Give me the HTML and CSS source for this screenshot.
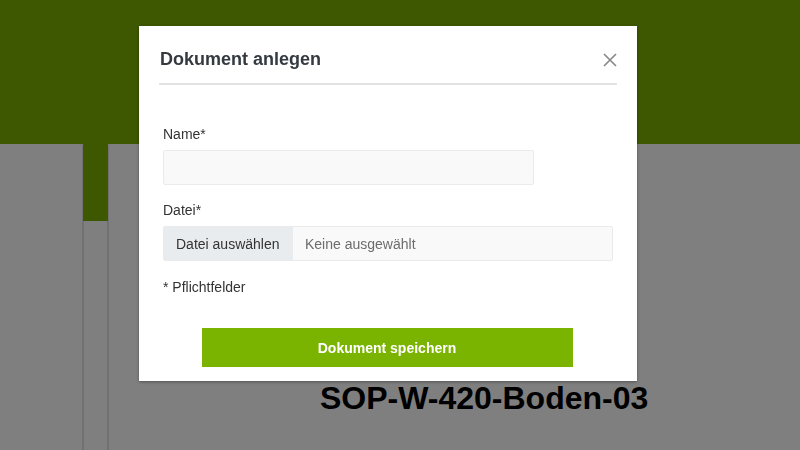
FILE: index.html
```html
<!DOCTYPE html>
<html lang="de">
<head>
<meta charset="utf-8">
<title>Dokument anlegen</title>
<link rel="stylesheet" href="styles.css">
</head>
<body>
<div class="page">
  <div class="col col-left">
    <div class="band"></div>
    <div class="card card-left"></div>
  </div>
  <div class="col col-mid">
    <div class="band band-tall"></div>
    <div class="card card-mid"></div>
  </div>
  <div class="col col-right">
    <div class="band"></div>
    <div class="card card-right">
      <h1 class="doc-title">SOP-W-420-Boden-03</h1>
    </div>
  </div>
</div>
<div class="overlay">
  <div class="modal">
    <div class="modal-header">
      <h2 class="modal-title">Dokument anlegen</h2>
      <button class="close" aria-label="Schließen">
        <svg width="14" height="14" viewBox="0 0 14 14"><path d="M1 1 L13 13 M13 1 L1 13" stroke="#8a8a8a" stroke-width="1.7" fill="none"/></svg>
      </button>
    </div>
    <div class="modal-body">
      <div class="field">
        <label class="label">Name*</label>
        <div class="input"></div>
      </div>
      <div class="field field-file">
        <label class="label">Datei*</label>
        <div class="file">
          <span class="file-btn">Datei auswählen</span>
          <span class="file-name">Keine ausgewählt</span>
        </div>
      </div>
      <p class="note">* Pflichtfelder</p>
      <div class="actions">
        <button class="save">Dokument speichern</button>
      </div>
    </div>
  </div>
</div>
</body>
</html>
```
FILE: styles.css
```css
* { box-sizing: border-box; }
html, body { margin: 0; padding: 0; }
body {
  width: 800px;
  height: 450px;
  overflow: hidden;
  font-family: "Liberation Sans", Arial, sans-serif;
  background: #ffffff;
}
.page {
  display: flex;
  height: 450px;
}
.col {
  display: flex;
  flex-direction: column;
}
.col-left { width: 83px; }
.col-mid { width: 25px; }
.col-right { flex: 1; }
.band {
  height: 144px;
  background: #7ab000;
  flex: none;
}
.band-tall { height: 221px; }
.card {
  flex: 1;
  background: #ffffff;
}
.card-left {
  border-right: 1px solid #e2e2e2;
  border-top-right-radius: 4px;
}
.card-mid {
  border-left: 1px solid #e2e2e2;
  border-right: 1px solid #e2e2e2;
}
.card-right {
  border-left: 1px solid #e2e2e2;
  border-top-left-radius: 4px;
  padding-left: 211px;
  padding-top: 236px;
}
.doc-title {
  margin: 0;
  font-size: 32px;
  line-height: 37px;
  font-weight: bold;
  color: #000;
  white-space: nowrap;
}
.overlay {
  position: fixed;
  inset: 0;
  background: rgba(0, 0, 0, 0.5);
}
.modal {
  position: absolute;
  left: 139px;
  top: 26px;
  width: 498px;
  height: 355px;
  background: #ffffff;
  box-shadow: 0 1px 3px rgba(0, 0, 0, 0.35);
  padding: 0 20px;
}
.modal-header {
  display: flex;
  justify-content: space-between;
  align-items: center;
  padding-top: 23px;
  padding-bottom: 13px;
  border-bottom: 2px solid #e2e2e2;
}
.modal-title {
  margin: 0 0 0 1px;
  font-size: 18px;
  line-height: 21px;
  font-weight: bold;
  color: #343a40;
}
.close {
  border: 0;
  background: transparent;
  padding: 0;
  width: 14px;
  height: 14px;
  display: flex;
}
.modal-body {
  padding: 39px 4px 0 4px;
}
.field { display: flex; flex-direction: column; }
.field-file { margin-top: 15px; }
.label {
  font-size: 14px;
  line-height: 20px;
  color: #333333;
  margin-bottom: 6px;
}
.input {
  width: 371px;
  height: 35px;
  background: #f9f9f9;
  border: 1px solid #ebebeb;
  border-radius: 2px;
}
.file {
  display: flex;
  width: 450px;
  height: 35px;
  background: #f9f9f9;
  border: 1px solid #ebebeb;
  border-radius: 2px;
  font-size: 14px;
  align-items: stretch;
}
.file-btn {
  width: 129px;
  background: #e9ecef;
  color: #333333;
  padding-left: 12px;
  display: flex;
  align-items: center;
}
.file-name {
  color: #6c6c6c;
  padding-left: 12px;
  display: flex;
  align-items: center;
}
.note {
  margin: 16px 0 0 0;
  font-size: 14px;
  line-height: 20px;
  color: #333333;
}
.actions {
  display: flex;
  justify-content: center;
  margin-top: 31px;
  padding-right: 2px;
}
.save {
  width: 371px;
  height: 39px;
  border: 0;
  background: #7ab400;
  color: #ffffff;
  font-family: "Liberation Sans", Arial, sans-serif;
  font-size: 14px;
  font-weight: bold;
}
```
